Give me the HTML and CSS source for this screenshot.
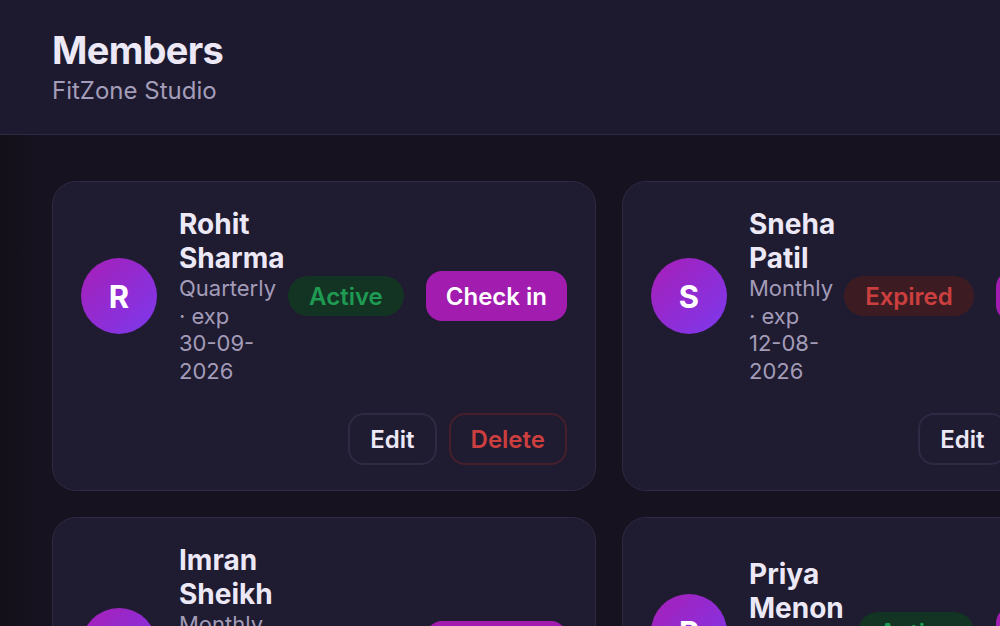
FILE: index.html
```html
<!DOCTYPE html>
<html lang="en">
<head>
<meta charset="utf-8">
<title>Members · FitZone Studio</title>
<link rel="stylesheet" href="styles.css">
</head>
<body>
<header class="page-header">
  <h1 class="title">Members</h1>
  <p class="subtitle">FitZone Studio</p>
</header>
<main class="content">
  <div class="grid">
    <article class="card">
      <div class="card-top">
        <div class="avatar">R</div>
        <div class="info">
          <div class="name">Rohit Sharma</div>
          <div class="meta">Quarterly · exp 30-09-2026</div>
        </div>
        <span class="badge badge-active">Active</span>
        <button class="btn btn-primary">Check in</button>
      </div>
      <div class="card-actions">
        <button class="btn btn-outline">Edit</button>
        <button class="btn btn-danger">Delete</button>
      </div>
    </article>
    <article class="card">
      <div class="card-top">
        <div class="avatar">S</div>
        <div class="info">
          <div class="name">Sneha Patil</div>
          <div class="meta">Monthly · exp 12-08-2026</div>
        </div>
        <span class="badge badge-expired">Expired</span>
        <button class="btn btn-primary">Check in</button>
      </div>
      <div class="card-actions">
        <button class="btn btn-outline">Edit</button>
        <button class="btn btn-danger">Delete</button>
      </div>
    </article>
    <article class="card">
      <div class="card-top">
        <div class="avatar">I</div>
        <div class="info">
          <div class="name">Imran Sheikh</div>
          <div class="meta">Monthly · exp 02-07-2026</div>
        </div>
        <span class="badge badge-warn">Expiring</span>
        <button class="btn btn-primary">Check in</button>
      </div>
      <div class="card-actions">
        <button class="btn btn-outline">Edit</button>
        <button class="btn btn-danger">Delete</button>
      </div>
    </article>
    <article class="card">
      <div class="card-top">
        <div class="avatar">P</div>
        <div class="info">
          <div class="name">Priya Menon</div>
          <div class="meta">Annual · no expiry</div>
        </div>
        <span class="badge badge-active">Active</span>
        <button class="btn btn-primary">Check in</button>
      </div>
      <div class="card-actions">
        <button class="btn btn-outline">Edit</button>
        <button class="btn btn-danger">Delete</button>
      </div>
    </article>
  </div>
</main>
</body>
</html>
```

FILE: styles.css
```css
html {
  overflow: hidden;
}

body {
  margin: 0;
  font-family: Inter, "Noto Sans", "Liberation Sans", sans-serif;
  color: #ece8f6;
  background: linear-gradient(90deg, #131019 0px, #16121f 40px, #16121f 100%);
  min-height: 100vh;
}

.page-header {
  background: #1d1a2f;
  border-bottom: 1px solid #2f2a44;
  padding: 27px 52px 29px;
}

.title {
  margin: 0;
  font-size: 38px;
  line-height: 46px;
  font-weight: 700;
  letter-spacing: -0.7px;
  color: #ece8f6;
}

.subtitle {
  margin: 3px 0 0;
  font-size: 24px;
  line-height: 29px;
  color: #a49db9;
}

.content {
  padding: 46px 52px;
}

.grid {
  display: grid;
  grid-template-columns: repeat(2, 544px);
  gap: 26px;
}

.card {
  background: #1f1b31;
  border: 1px solid #2f2a44;
  border-radius: 24px;
  padding: 25px 28px;
}

.card-top {
  display: flex;
  align-items: center;
  gap: 22px;
  min-height: 178px;
}

.avatar {
  flex: 0 0 76px;
  width: 76px;
  height: 76px;
  border-radius: 50%;
  background: linear-gradient(135deg, #a81fb6 0%, #8d2ed8 60%, #7c3aed 100%);
  color: #ffffff;
  font-size: 31px;
  font-weight: 700;
  display: flex;
  align-items: center;
  justify-content: center;
}

.info {
  flex: 1 1 0;
  min-width: 0;
}

.name {
  font-size: 28px;
  line-height: 34px;
  font-weight: 700;
  color: #ece8f6;
}

.meta {
  font-size: 22px;
  line-height: 27.5px;
  color: #a39cb8;
}

.badge {
  flex: 0 0 auto;
  height: 40px;
  padding: 0 21px;
  border-radius: 999px;
  font-size: 24px;
  font-weight: 600;
  display: inline-flex;
  align-items: center;
}

.badge-active {
  background: #133423;
  color: #1f9a52;
}

.badge-expired {
  background: #3c1c22;
  color: #cc3f3f;
}

.badge-warn {
  background: #3a2a16;
  color: #d08a1f;
}

.btn {
  flex: 0 0 auto;
  font-family: inherit;
  font-size: 24px;
  font-weight: 600;
  border-radius: 16px;
  padding: 0 20px;
  cursor: pointer;
  display: inline-flex;
  align-items: center;
  justify-content: center;
}

.btn-primary {
  height: 50px;
  border: none;
  background: #a21caf;
  color: #ffffff;
}

.btn-outline {
  height: 52px;
  border: 2px solid #2f2a44;
  background: transparent;
  color: #ece8f6;
}

.btn-danger {
  height: 52px;
  border: 2px solid #45202a;
  background: transparent;
  color: #cc3f3f;
}

.card-actions {
  display: flex;
  justify-content: flex-end;
  gap: 12px;
  margin-top: 28px;
}
```
